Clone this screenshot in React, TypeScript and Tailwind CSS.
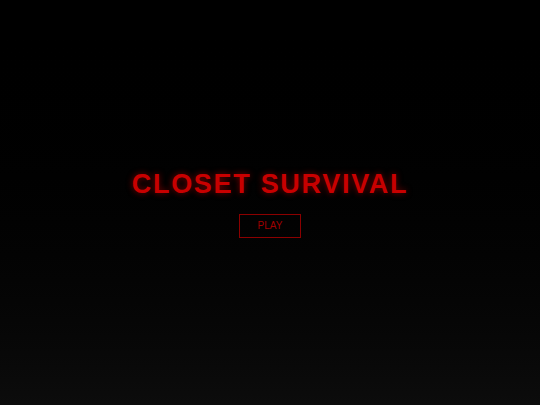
import React from "react";

export default function App() {
  return (
    <div
      className="w-[540px] h-[405px] flex flex-col items-center justify-center bg-gradient-to-b from-[#000000] to-[#0c0c0c]"
      style={{ fontFamily: '"Liberation Sans", Arial, sans-serif' }}
    >
      <h1 className="text-[27px] leading-[32px] font-bold tracking-[1.7px] text-[#c80000] [text-shadow:0_0_6px_rgba(204,0,0,0.6)]">
        CLOSET SURVIVAL
      </h1>
      <button className="mt-[14px] w-[62px] h-[24px] border border-[#8b0000] text-[#a00000] text-[10px] leading-none flex items-center justify-center">
        PLAY
      </button>
    </div>
  );
}
